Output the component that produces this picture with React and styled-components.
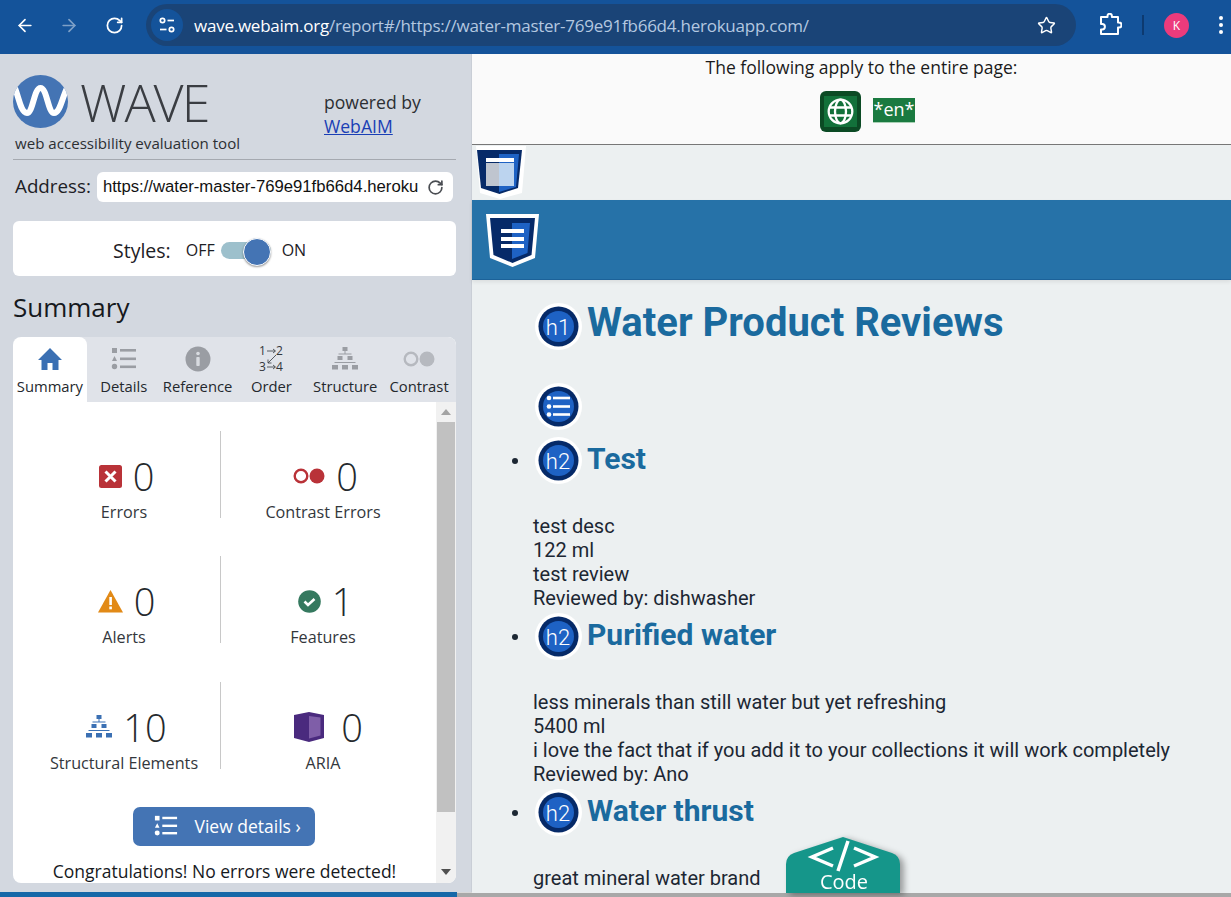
import React from 'react'
import styled, { createGlobalStyle } from 'styled-components'
import { ArrowLeft, ArrowRight, RotateCw, Star } from 'lucide-react'

const Global = createGlobalStyle`
  html, body { margin: 0; padding: 0; height: 100%; overflow: hidden; }
  body { font-family: "Open Sans", sans-serif; background: #14539a; }
  * { box-sizing: border-box; }
`

const Page = styled.div`
  width: 1231px;
  height: 897px;
  display: grid;
  grid-template-rows: 54px 838px 5px;
  overflow: hidden;
`

/* browser chrome */
const TopBar = styled.header`
  display: flex;
  align-items: center;
  background: #14539a;
  padding: 0 0 4px 15px;
  color: #fff;
`
const NavButton = styled.div`
  width: 20px;
  height: 20px;
  margin-right: ${({ $gap }) => $gap || 0}px;
  display: flex;
  align-items: center;
  justify-content: center;
  opacity: ${({ $dim }) => ($dim ? 0.45 : 1)};
`
const ExtensionSlot = styled.div`
  width: 24px;
  height: 24px;
  margin-left: 22px;
`
const Omnibox = styled.div`
  width: 930px;
  height: 42px;
  border-radius: 21px;
  background: #1a4477;
  display: flex;
  align-items: center;
  padding: 0 20px 0 5px;
`
const SiteChip = styled.div`
  width: 32px;
  height: 32px;
  border-radius: 50%;
  background: #14539a;
  display: flex;
  align-items: center;
  justify-content: center;
  margin-right: 11px;
`
const Url = styled.div`
  flex: 1;
  font-size: 17px;
  letter-spacing: -0.24px;
  color: #b4c8e0;
  white-space: nowrap;
  b { font-weight: 400; color: #fff; }
`
const Avatar = styled.div`
  width: 25px;
  height: 25px;
  border-radius: 50%;
  background: #ec3b7c;
  font-size: 12px;
  display: flex;
  align-items: center;
  justify-content: center;
`
const ToolDivider = styled.div`
  width: 2px;
  height: 20px;
  background: #0d3a70;
  margin: 0 20px 0 20px;
`
const Kebab = styled.div`
  display: flex;
  flex-direction: column;
  gap: 3px;
  margin-left: 30px;
  i { width: 4px; height: 4px; border-radius: 50%; background: #fff; }
`

const Body = styled.div`
  display: grid;
  grid-template-columns: 472px 1fr;
  min-height: 0;
`

/* WAVE sidebar */
const Sidebar = styled.aside`
  background: #d3d8e0;
  padding: 21px 15px 10px 13px;
  display: flex;
  flex-direction: column;
  min-height: 0;
  border-right: 1px solid #c9ced6;
`
const Brand = styled.div`
  display: flex;
  justify-content: space-between;
  border-bottom: 1px solid #a5a9b0;
  height: 85px;
`
const LogoRow = styled.div`
  display: flex;
  align-items: center;
  gap: 12px;
  height: 53px;
`
const WaveWord = styled.div`
  font-size: 52px;
  font-weight: 300;
  line-height: 53px;
  color: #3a3d42;
  letter-spacing: -2px;
`
const Tagline = styled.div`
  font-size: 15.1px;
  color: #2c2f33;
  margin: 5px 0 0 2px;
  line-height: 20px;
`
const Powered = styled.div`
  width: 132px;
  padding-top: 15px;
  font-size: 17.6px;
  line-height: 24px;
  color: #2c2f33;
  a { color: #1a3fb5; text-decoration: underline; }
`
const AddressRow = styled.div`
  display: flex;
  align-items: center;
  height: 30px;
  margin-top: 12px;
  padding-left: 2px;
  font-size: 18.8px;
  color: #1d2025;
  gap: 6px;
`
const AddressLabel = styled.span`
  margin-top: -2px;
`
const AddressBox = styled.div`
  width: 356px;
  height: 30px;
  background: #fff;
  border-radius: 6px;
  padding: 0 9px 0 6px;
  display: flex;
  align-items: center;
  justify-content: space-between;
  font-family: "Liberation Sans", sans-serif;
  font-size: 16.7px;
  color: #111;
  white-space: nowrap;
`
const StylesCard = styled.div`
  height: 55px;
  margin-top: 19px;
  background: #fff;
  border-radius: 6px;
  display: flex;
  align-items: center;
  padding: 3px 0 0 100px;
  color: #1d2025;
`
const StylesLabel = styled.span`
  font-size: 19.5px;
  margin-right: 15px;
`
const SwitchLabel = styled.span`
  font-size: 16px;
`
const Switch = styled.div`
  position: relative;
  width: 50px;
  height: 17px;
  border-radius: 9px;
  background: #9dc0cc;
  margin: 0 11px 0 6px;
  &::after {
    content: '';
    position: absolute;
    right: 0;
    top: -4px;
    width: 26px;
    height: 26px;
    border-radius: 50%;
    background: #4474b4;
    border: 1px solid #fff;
    box-shadow: 0 1px 2px rgba(0, 0, 0, 0.4);
  }
`
const SummaryTitle = styled.h2`
  font-size: 26px;
  font-weight: 400;
  line-height: 36px;
  margin: 13px 0 12px 0;
  color: #16191d;
`
const Panel = styled.section`
  flex: 1;
  min-height: 0;
  border-radius: 8px;
  overflow: hidden;
  display: flex;
  flex-direction: column;
  background: #fff;
`
const Tabs = styled.div`
  display: grid;
  grid-template-columns: repeat(6, 1fr);
  background: #e0e3e9;
  height: 65px;
`
const Tab = styled.div`
  display: flex;
  flex-direction: column;
  align-items: center;
  padding-top: 8px;
  background: ${({ $active }) => ($active ? '#fff' : 'transparent')};
  border-radius: ${({ $active }) => ($active ? '8px 8px 0 0' : '0')};
  font-size: 14.8px;
  color: #24282d;
  white-space: nowrap;
`
const TabIcon = styled.div`
  height: 27px;
  display: flex;
  align-items: center;
  justify-content: center;
  margin-bottom: 4px;
`
const PanelBody = styled.div`
  flex: 1;
  min-height: 0;
  display: grid;
  grid-template-columns: 1fr 20px;
`
const SummaryContent = styled.div`
  padding-top: 29px;
  display: flex;
  flex-direction: column;
  align-items: center;
  overflow: hidden;
`
const Stats = styled.div`
  width: 100%;
  flex-shrink: 0;
  display: grid;
  grid-template-columns: 193px 204px;
  grid-auto-rows: 87px;
  row-gap: 38.4px;
  padding-left: 15px;
`
const Stat = styled.div`
  display: flex;
  flex-direction: column;
  align-items: center;
  border-right: ${({ $divider }) => ($divider ? '1px solid #c8c8c8' : 'none')};
`
const StatTop = styled.div`
  display: flex;
  align-items: center;
  justify-content: center;
  gap: ${({ $gap }) => $gap || 11}px;
  height: 50px;
  margin-top: 20px;
  padding-left: ${({ $shift }) => $shift || 5}px;
  flex-shrink: 0;
`
const Count = styled.span`
  font-size: 38px;
  font-weight: 300;
  line-height: 50px;
  color: #25292d;
`
const StatLabel = styled.div`
  font-size: 16.2px;
  line-height: 20px;
  margin-top: 1px;
  color: #33373c;
  white-space: nowrap;
  flex-shrink: 0;
`
const DetailsButton = styled.div`
  width: 182px;
  height: 39px;
  flex-shrink: 0;
  margin: 38px 2px 0 0;
  border-radius: 7px;
  background: #4474b4;
  color: #fff;
  font-size: 17.5px;
  display: flex;
  align-items: center;
  padding-left: 21px;
  gap: 17px;
`
const Congrats = styled.div`
  margin-top: 14px;
  flex-shrink: 0;
  font-size: 17.5px;
  line-height: 22px;
  color: #16191d;
  white-space: nowrap;
`
const Scrollbar = styled.div`
  background: #f1f1f1;
  display: flex;
  flex-direction: column;
  align-items: center;
  justify-content: space-between;
  padding: 0 0 8px;
  position: relative;
`
const Arrow = styled.div`
  width: 0;
  height: 0;
  border-left: 5px solid transparent;
  border-right: 5px solid transparent;
  ${({ $up }) => ($up ? 'border-bottom: 6px solid #a3a3a3; margin-top: 7px;' : 'border-top: 6px solid #505050;')}
`
const Thumb = styled.div`
  position: absolute;
  top: 20px;
  left: 1px;
  width: 18px;
  height: 390px;
  background: #c1c1c1;
`

/* page under test */
const Main = styled.main`
  background: #ecf0f1;
  position: relative;
  font-family: Roboto, sans-serif;
  color: #1c2733;
`
const Notice = styled.div`
  height: 91px;
  background: #fafafa;
  border-bottom: 1px solid #777;
  font-family: "Open Sans", sans-serif;
  font-size: 17.5px;
  text-align: center;
  padding: 1px 0 0 20px;
  color: #1a1a1a;
  line-height: 25px;
`
const NoticeIcons = styled.div`
  display: flex;
  justify-content: center;
  align-items: center;
  gap: 12px;
  margin-top: 11px;
  padding-left: 12px;
`
const LangTag = styled.span`
  background: #1a7a40;
  color: #fff;
  padding: 0 1px;
  height: 25px;
  line-height: 23px;
  font-size: 18px;
  border: 1px solid #a8d0b4;
  border-width: 0 0 1px 0;
  margin-top: -2px;
`
const ShieldRow = styled.div`
  height: 55px;
  padding: 1px 0 0 4px;
`
const HeaderBand = styled.div`
  height: 80px;
  background: #2672a8;
  border-bottom: 1px solid #1c6299;
  box-shadow: 0 2px 4px rgba(0, 0, 0, 0.08);
  padding: 14px 0 0 14px;
`
const Content = styled.div`
  padding: 23px 0 0 63px;
`
const HeadingRow = styled.div`
  display: flex;
  align-items: center;
  gap: 5px;
  height: 46px;
  margin-top: ${({ $top }) => $top || 0}px;
`
const Title = styled.h1`
  margin: 0;
  font-size: 40px;
  font-weight: 700;
  color: #1a6a9e;
  line-height: 46px;
  white-space: nowrap;
  position: relative;
  top: -3px;
`
const ReviewList = styled.ul`
  margin: 8px 0 0;
  padding: 0;
  list-style: none;
`
const Review = styled.li`
  position: relative;
  padding-bottom: 3px;
  &::before {
    content: '';
    position: absolute;
    left: -23px;
    top: 21px;
    width: 6px;
    height: 6px;
    border-radius: 50%;
    background: #1c2733;
  }
`
const ReviewTitle = styled.h2`
  margin: 0;
  font-size: 30px;
  font-weight: 700;
  color: #1a6a9e;
  white-space: nowrap;
  line-height: 40px;
  position: relative;
  top: -1px;
`
const ReviewText = styled.div`
  margin: 31px 0 0 -4px;
  padding-left: 2px;
  font-size: 20px;
  line-height: 24px;
  white-space: nowrap;
`
const CodeTab = styled.div`
  position: absolute;
  left: 314px;
  bottom: 0;
  width: 114px;
  height: 56px;
  color: #fff;
  filter: drop-shadow(4px 2px 3px rgba(0, 0, 0, 0.35));
  text-align: center;
  font-family: "Open Sans", sans-serif;
  font-size: 20px;
  svg { position: absolute; left: 0; top: 0; }
`
const CodeLabel = styled.span`
  position: absolute;
  left: 2px;
  right: 0;
  bottom: 0;
  line-height: 22px;
`

const Footer = styled.div`
  display: grid;
  grid-template-columns: 457px 1fr;
`
const FooterBlue = styled.div`
  background: #1568a8;
`
const FooterGrey = styled.div`
  background: #a8a8a8;
  border-top: 1px solid #d8d8d8;
`

/* icons */
const SiteTune = () => (
  <svg width="18" height="18" viewBox="0 0 18 18" fill="none" stroke="#fff" strokeWidth="1.7">
    <circle cx="4.5" cy="4.5" r="2.2" />
    <path d="M9.5 4.5H16" />
    <circle cx="13.5" cy="13.5" r="2.2" />
    <path d="M2 13.5H8.500" />
  </svg>
)
const ExtensionIcon = () => (
  <svg width="24" height="24" viewBox="0 0 24 24" fill="none" stroke="#fff" strokeWidth="2" strokeLinejoin="round">
    <path d="M3 4h6.500V3a2.200 2.200 0 0 1 4.400 0v1H20v5.500h1a2.400 2.400 0 0 1 0 5h-1V21H3v-4.500h1.200a2.700 2.700 0 0 0 0-5.400H3z" />
  </svg>
)
const WaveLogo = () => (
  <svg width="55" height="53" viewBox="0 0 55 53">
    <defs>
      <clipPath id="logo-clip"><ellipse cx="27.500" cy="26.500" rx="27.500" ry="26.500" /></clipPath>
    </defs>
    <ellipse cx="27.500" cy="26.500" rx="27.500" ry="26.500" fill="#4474b4" />
    <path
      d="M2 13C6 23 8 38 14 38 20 38 21 13 27.500 13 34 13 35 38 41 38 47 38 49 23 54 13"
      fill="none"
      stroke="#fff"
      strokeWidth="6"
      clipPath="url(#logo-clip)"
    />
  </svg>
)
const RefreshSmall = () => <RotateCw size={17} color="#4a4d52" strokeWidth={2.4} />
const HomeIcon = () => (
  <svg width="26" height="24" viewBox="0 0 26 24" fill="#3b70b3">
    <path d="M13 1 25 13h-3.500v10H15.500v-7h-5v7H4.500V13H1z" />
  </svg>
)
const DetailsIcon = ({ color = '#9a9da3', size = 26, line = '#9a9da3' }) => (
  <svg width={size} height={size} viewBox="0 0 26 26" fill={color}>
    <rect x="1" y="2" width="5" height="5" />
    <path d="M3.500 10 6 15H1z" />
    <circle cx="3.500" cy="20.500" r="2.700" />
    <rect x="9" y="3" width="16" height="2.600" fill={line} />
    <rect x="9" y="11.500" width="16" height="2.600" fill={line} />
    <rect x="9" y="19.500" width="16" height="2.600" fill={line} />
  </svg>
)
const InfoIcon = () => (
  <svg width="26" height="26" viewBox="0 0 26 26">
    <circle cx="13" cy="13" r="12.500" fill="#9a9da3" />
    <circle cx="13" cy="7.500" r="1.800" fill="#d8dbe0" />
    <rect x="11.300" y="11" width="3.400" height="9" rx="0.800" fill="#d8dbe0" />
  </svg>
)
const OrderIcon = () => (
  <svg width="30" height="32" viewBox="0 0 30 32" fontFamily="Open Sans, sans-serif" fontSize="12" fill="#33373c">
    <text x="3" y="12">1</text>
    <text x="20" y="12">2</text>
    <text x="3" y="28">3</text>
    <text x="20" y="28">4</text>
    <path d="M11 8h8M17 6l2.500 2-2.500 2M11 24h8M17 22l2.500 2-2.500 2M20 12 12 20M12 16.500V20h3.500" fill="none" stroke="#33373c" strokeWidth="0.800" />
  </svg>
)
const TreeIcon = ({ color, size = 26 }) => (
  <svg width={size} height={size} viewBox="0 0 26 26" fill={color}>
    <rect x="10.500" y="1" width="5" height="4" />
    <rect x="12.500" y="5" width="1" height="3" />
    <rect x="6.500" y="7.500" width="13" height="1" />
    <rect x="5.500" y="10" width="5" height="4" />
    <rect x="15.500" y="10" width="5" height="4" />
    <rect x="2.500" y="16" width="21" height="1" />
    <rect x="0" y="19" width="6" height="4.500" />
    <rect x="10" y="19" width="6" height="4.500" />
    <rect x="20" y="19" width="6" height="4.500" />
  </svg>
)
const ContrastIcon = ({ color, w = 32 }) => (
  <svg width={w} height={w * 0.5} viewBox="0 0 32 16">
    <circle cx="8" cy="8" r="6.300" fill="none" stroke={color} strokeWidth="2.400" />
    <circle cx="24" cy="8" r="7.500" fill={color} />
  </svg>
)
const ErrorIcon = () => (
  <svg width="23" height="23" viewBox="0 0 23 23">
    <rect width="23" height="23" rx="2.500" fill="#b93238" />
    <path d="M6.500 6.500l10 10M16.500 6.500l-10 10" stroke="#fff" strokeWidth="3" />
  </svg>
)
const AlertIcon = () => (
  <svg width="25" height="23" viewBox="0 0 25 23">
    <path d="M12.500 0 25 22.500H0z" fill="#e28a17" />
    <rect x="11.300" y="7" width="2.600" height="8" fill="#fff" />
    <rect x="11.300" y="16.500" width="2.600" height="2.800" fill="#fff" />
  </svg>
)
const CheckIcon = () => (
  <svg width="23" height="23" viewBox="0 0 23 23">
    <circle cx="11.500" cy="11.500" r="11.300" fill="#35795f" />
    <path d="M6.500 11.500l3.500 3.500 6.500-6" fill="none" stroke="#fff" strokeWidth="2.600" />
  </svg>
)
const AriaIcon = () => (
  <svg width="30" height="30" viewBox="0 0 30 30">
    <path d="M0 3 15 0 30 3V26L15 30 0 26z" fill="#4a2a7e" />
    <path d="M15 4 26.500 5.500V23.500L15 26.500z" fill="#7f5ea8" />
  </svg>
)
const GlobeIcon = () => (
  <svg width="41" height="41" viewBox="0 0 41 41">
    <rect width="41" height="41" rx="6" fill="#0b4a24" />
    <rect x="4" y="5" width="33" height="31" fill="#12713a" />
    <g fill="none" stroke="#fff" strokeWidth="2.300">
      <circle cx="20.500" cy="20.500" r="11.800" />
      <ellipse cx="20.500" cy="20.500" rx="5.500" ry="11.800" />
      <path d="M9 16.500h23M9 24.500h23" />
    </g>
  </svg>
)
const PageShield = () => (
  <svg width="50" height="53" viewBox="0 0 50 53">
    <path d="M0 0H50L46 47 24 53 4 47z" fill="#fff" />
    <path d="M1 4H46L42 42 23.500 48 5 42z" fill="#062a68" />
    <path d="M23 8H43L40 41 23 46z" fill="#1e62c4" />
    <rect x="10" y="17" width="13" height="23" fill="#bfc5cf" />
    <rect x="23" y="17" width="15" height="23" fill="#bcd4ef" />
    <rect x="10" y="12" width="28" height="4" fill="#fff" />
  </svg>
)
const HeaderShield = () => (
  <svg width="53" height="53" viewBox="0 0 53 53">
    <path d="M0 0H53L49 44 26.500 53 4 44z" fill="#fff" />
    <path d="M4 4H49L45.500 41 26.500 49 7.500 41z" fill="#062a68" />
    <path d="M26 9H44L41.500 39 26 45z" fill="#1e62c4" />
    <rect x="15" y="15" width="23" height="4" fill="#fff" />
    <rect x="15" y="23" width="23" height="4" fill="#fff" />
    <rect x="15" y="30" width="23" height="4" fill="#fff" />
  </svg>
)
const HeadingBadge = ({ level }) => (
  <svg width="47" height="47" viewBox="0 0 47 47" fontFamily="Roboto, sans-serif">
    <circle cx="23.500" cy="23.500" r="23.500" fill="#fff" />
    <circle cx="23.500" cy="23.500" r="20" fill="#062a68" />
    <circle cx="23.500" cy="23.500" r="15.500" fill="#1e62c4" />
    <text x="23" y="31.500" textAnchor="middle" fontSize="22" fontWeight="300" fill="#fff">{level}</text>
  </svg>
)
const ListBadge = () => (
  <svg width="47" height="47" viewBox="0 0 47 47" fill="#fff">
    <circle cx="23.500" cy="23.500" r="23.500" />
    <circle cx="23.500" cy="23.500" r="20" fill="#062a68" />
    <circle cx="23.500" cy="23.500" r="15.500" fill="#1e62c4" />
    <circle cx="14" cy="15" r="2.300" />
    <circle cx="14" cy="23.500" r="2.300" />
    <circle cx="14" cy="31.500" r="2.300" />
    <rect x="18" y="13.700" width="17" height="2.600" />
    <rect x="18" y="22.200" width="17" height="2.600" />
    <rect x="18" y="30.200" width="17" height="2.600" />
  </svg>
)

const tabs = [
  { label: 'Summary', icon: <HomeIcon />, active: true },
  { label: 'Details', icon: <DetailsIcon /> },
  { label: 'Reference', icon: <InfoIcon /> },
  { label: 'Order', icon: <OrderIcon /> },
  { label: 'Structure', icon: <TreeIcon color="#9a9da3" /> },
  { label: 'Contrast', icon: <ContrastIcon color="#b6b9bf" /> },
]

const stats = [
  { label: 'Errors', count: 0, icon: <ErrorIcon />, divider: true },
  { label: 'Contrast Errors', count: 0, icon: <ContrastIcon color="#b93238" /> },
  { label: 'Alerts', count: 0, icon: <AlertIcon />, divider: true },
  { label: 'Features', count: 1, icon: <CheckIcon /> },
  { label: 'Structural Elements', count: 10, icon: <TreeIcon color="#3b70b3" />, divider: true },
  { label: 'ARIA', count: 0, icon: <AriaIcon />, gap: 17, shift: 11 },
]

const reviews = [
  { title: 'Test', lines: ['test desc', '122 ml', 'test review', 'Reviewed by: dishwasher'] },
  {
    title: 'Purified water',
    lines: [
      'less minerals than still water but yet refreshing',
      '5400 ml',
      'i love the fact that if you add it to your collections it will work completely',
      'Reviewed by: Ano',
    ],
  },
  { title: 'Water thrust', lines: ['great mineral water brand'] },
]

export default function App() {
  return (
    <Page>
      <Global />
      <TopBar>
        <NavButton $gap={24}><ArrowLeft size={21} strokeWidth={2} /></NavButton>
        <NavButton $gap={25} $dim><ArrowRight size={21} strokeWidth={2} /></NavButton>
        <NavButton $gap={22}><RotateCw size={19} strokeWidth={2.2} /></NavButton>
        <Omnibox>
          <SiteChip><SiteTune /></SiteChip>
          <Url><b>wave.webaim.org</b>/report#/https://water-master-769e91fb66d4.herokuapp.com/</Url>
          <Star size={19} strokeWidth={1.8} />
        </Omnibox>
        <ExtensionSlot><ExtensionIcon /></ExtensionSlot>
        <ToolDivider />
        <Avatar>K</Avatar>
        <Kebab><i /><i /><i /></Kebab>
      </TopBar>

      <Body>
        <Sidebar>
          <Brand>
            <div>
              <LogoRow>
                <WaveLogo />
                <WaveWord>WAVE</WaveWord>
              </LogoRow>
              <Tagline>web accessibility evaluation tool</Tagline>
            </div>
            <Powered>powered by<br /><a>WebAIM</a></Powered>
          </Brand>
          <AddressRow>
            <AddressLabel>Address:</AddressLabel>
            <AddressBox>
              https://water-master-769e91fb66d4.heroku
              <RefreshSmall />
            </AddressBox>
          </AddressRow>
          <StylesCard>
            <StylesLabel>Styles:</StylesLabel>
            <SwitchLabel>OFF</SwitchLabel>
            <Switch />
            <SwitchLabel>ON</SwitchLabel>
          </StylesCard>
          <SummaryTitle>Summary</SummaryTitle>
          <Panel>
            <Tabs>
              {tabs.map(t => (
                <Tab key={t.label} $active={t.active}>
                  <TabIcon>{t.icon}</TabIcon>
                  {t.label}
                </Tab>
              ))}
            </Tabs>
            <PanelBody>
              <SummaryContent>
                <Stats>
                  {stats.map(s => (
                    <Stat key={s.label} $divider={s.divider}>
                      <StatTop $gap={s.gap} $shift={s.shift}>
                        {s.icon}
                        <Count>{s.count}</Count>
                      </StatTop>
                      <StatLabel>{s.label}</StatLabel>
                    </Stat>
                  ))}
                </Stats>
                <DetailsButton>
                  <DetailsIcon color="#fff" line="#fff" size={24} />
                  View details ›
                </DetailsButton>
                <Congrats>Congratulations! No errors were detected!</Congrats>
              </SummaryContent>
              <Scrollbar>
                <Arrow $up />
                <Thumb />
                <Arrow />
              </Scrollbar>
            </PanelBody>
          </Panel>
        </Sidebar>

        <Main>
          <Notice>
            The following apply to the entire page:
            <NoticeIcons>
              <GlobeIcon />
              <LangTag>*en*</LangTag>
            </NoticeIcons>
          </Notice>
          <ShieldRow><PageShield /></ShieldRow>
          <HeaderBand><HeaderShield /></HeaderBand>
          <Content>
            <HeadingRow>
              <HeadingBadge level="h1" />
              <Title>Water Product Reviews</Title>
            </HeadingRow>
            <HeadingRow $top={34}>
              <ListBadge />
            </HeadingRow>
            <ReviewList>
              {reviews.map(r => (
                <Review key={r.title}>
                  <HeadingRow>
                    <HeadingBadge level="h2" />
                    <ReviewTitle>{r.title}</ReviewTitle>
                  </HeadingRow>
                  <ReviewText>
                    {r.lines.map(l => <div key={l}>{l}</div>)}
                  </ReviewText>
                </Review>
              ))}
            </ReviewList>
          </Content>
          <CodeTab>
            <svg width="114" height="56" viewBox="0 0 114 56">
              <path d="M57 0 106 16Q114 19 114 27V56H0V27Q0 19 8 16z" fill="#15968a" />
              <path d="M47 11 26 20 47 29M68 11 89 20 68 29M62 4 52 34" fill="none" stroke="#fff" strokeWidth="3.500" />
            </svg>
            <CodeLabel>Code</CodeLabel>
          </CodeTab>
        </Main>
      </Body>
      <Footer>
        <FooterBlue />
        <FooterGrey />
      </Footer>
    </Page>
  )
}
